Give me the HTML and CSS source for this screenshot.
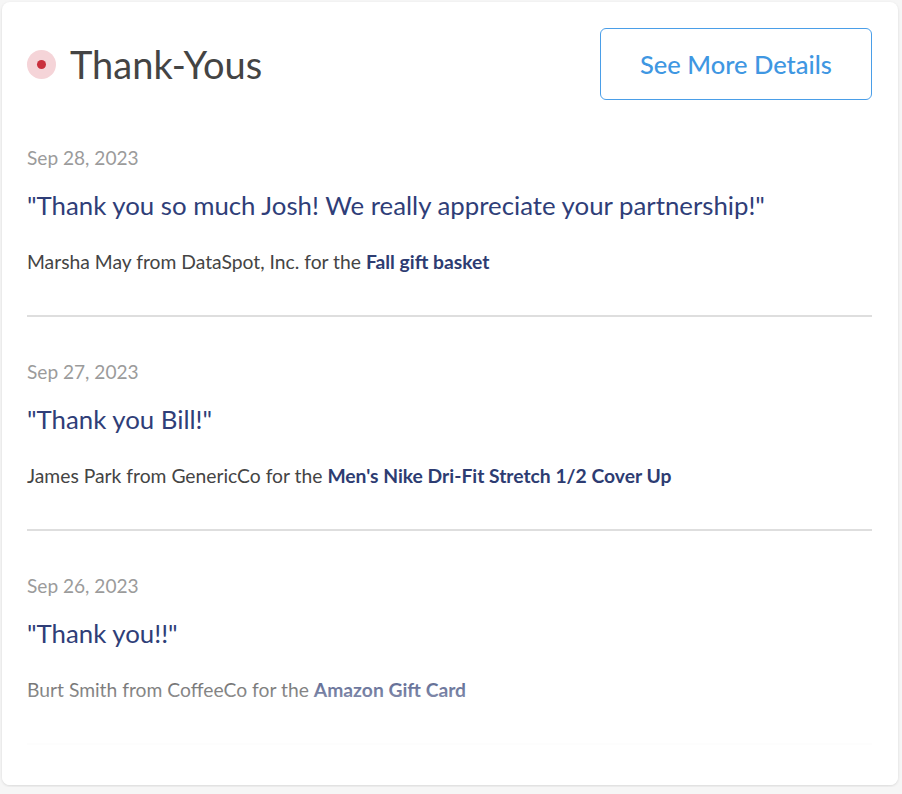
FILE: index.html
```html
<!DOCTYPE html>
<html>
<head>
<meta charset="utf-8">
<link rel="stylesheet" href="styles.css">
</head>
<body>
<div class="card">
  <div class="header">
    <div class="title-wrap">
      <span class="dot"><span class="dot-inner"></span></span>
      <h2 class="title">Thank-Yous</h2>
    </div>
    <button class="details-btn">See More Details</button>
  </div>
  <div class="list">
    <div class="item">
      <div class="date">Sep 28, 2023</div>
      <div class="quote">"Thank you so much Josh! We really appreciate your partnership!"</div>
      <div class="attr">Marsha May from DataSpot, Inc. for the <strong>Fall gift basket</strong></div>
    </div>
    <div class="item">
      <div class="date">Sep 27, 2023</div>
      <div class="quote">"Thank you Bill!"</div>
      <div class="attr">James Park from GenericCo for the <strong>Men's Nike Dri-Fit Stretch 1/2 Cover Up</strong></div>
    </div>
    <div class="item">
      <div class="date">Sep 26, 2023</div>
      <div class="quote">"Thank you!!"</div>
      <div class="attr">Burt Smith from CoffeeCo for the <strong>Amazon Gift Card</strong></div>
    </div>
  </div>
  <div class="fade"></div>
</div>
</body>
</html>
```
FILE: styles.css
```css
html, body {
  margin: 0;
  padding: 0;
  background: #f6f6f6;
}
body {
  padding: 2px;
  font-family: Lato, "Open Sans", sans-serif;
}
.card {
  position: relative;
  box-sizing: border-box;
  width: 896px;
  height: 783px;
  background: #fff;
  border-radius: 8px;
  box-shadow: 0 1px 3px rgba(0,0,0,0.12);
  padding: 26px 26px 0 25px;
  overflow: hidden;
}
.header {
  display: flex;
  justify-content: space-between;
  align-items: center;
}
.title-wrap {
  display: flex;
  align-items: center;
  gap: 14px;
}
.dot {
  width: 29px;
  height: 29px;
  border-radius: 50%;
  background: #f5d4d8;
  display: flex;
  align-items: center;
  justify-content: center;
}
.dot-inner {
  width: 9px;
  height: 9px;
  border-radius: 50%;
  background: #c9303d;
}
.title {
  margin: 0;
  font-size: 38px;
  font-weight: 400;
  color: #444;
  line-height: 48px;
}
.details-btn {
  width: 272px;
  height: 72px;
  border: 1px solid #4a9ee8;
  border-radius: 6px;
  background: #fff;
  color: #3f97e2;
  font-family: Lato, "Open Sans", sans-serif;
  font-size: 25.5px;
  font-weight: 500;
  padding: 0;
}
.list {
  margin-top: 46px;
}
.item {
  border-bottom: 2px solid #dedede;
  padding-bottom: 41px;
  margin-bottom: 43px;
}
.item:last-child {
  border-bottom-color: #f4f4f4;
}
.date {
  font-size: 19.1px;
  line-height: 24px;
  color: #9b9b9b;
}
.quote {
  margin-top: 19px;
  font-size: 25.8px;
  line-height: 32px;
  color: #2f3e78;
}
.attr {
  margin-top: 29px;
  font-size: 19.3px;
  line-height: 24px;
  color: #444;
}
.attr strong {
  font-weight: 700;
  color: #2d3c72;
}
.fade {
  position: absolute;
  left: 0;
  right: 0;
  bottom: 0;
  height: 130px;
  background: linear-gradient(to bottom, rgba(255,255,255,0) 0%, rgba(255,255,255,0.85) 70%, #fff 100%);
  pointer-events: none;
}
```
